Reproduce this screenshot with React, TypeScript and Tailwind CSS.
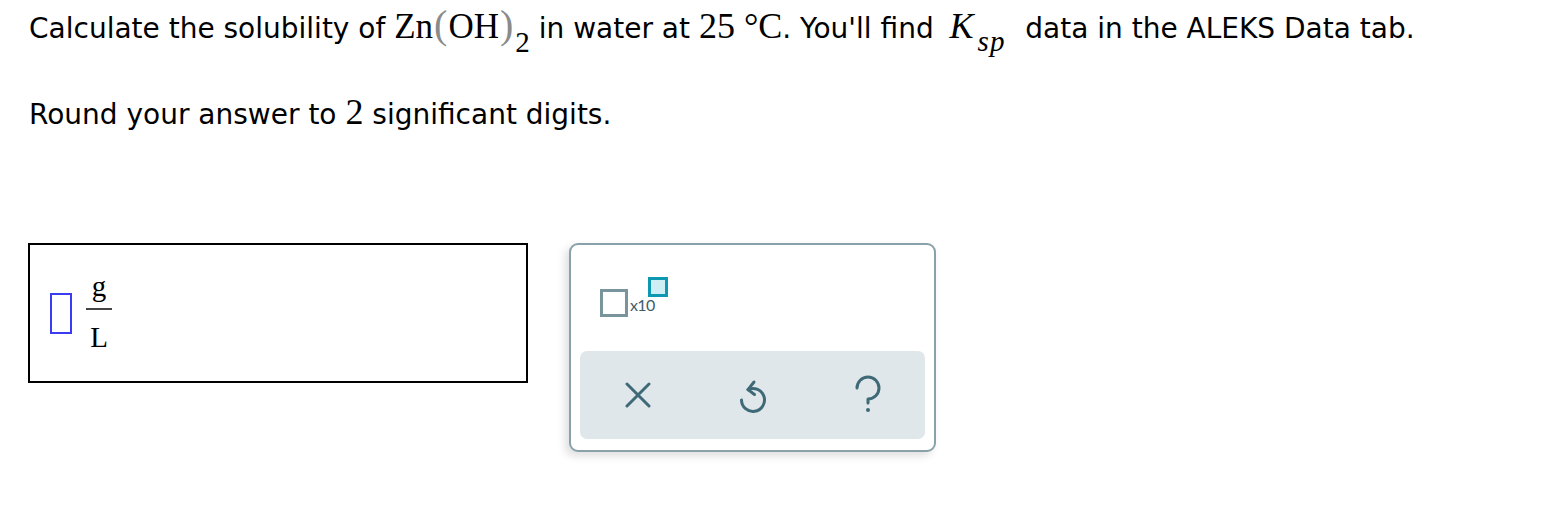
import React from "react";

const sans = { fontFamily: '"DejaVu Sans", Verdana, sans-serif' };

function UndoIcon() {
  return (
    <svg width="28" height="36" viewBox="0 0 28 36" fill="none" stroke="#3e6a77" strokeWidth="3" strokeLinecap="round" strokeLinejoin="round">
      <path d="M9 12.6 A11.5 11.5 0 1 1 2.5 23" />
      <path d="M15 5 L9 12.6 L15.5 17.5" />
    </svg>
  );
}

function QuestionIcon() {
  return (
    <svg width="28" height="40" viewBox="0 0 28 40" fill="none" stroke="#3e6a77" strokeWidth="3" strokeLinecap="round" strokeLinejoin="round">
      <path d="M3 13 A11 11 0 1 1 14 24 V28" />
      <circle cx="14" cy="35" r="2" fill="#3e6a77" stroke="none" />
    </svg>
  );
}

function XIcon() {
  return (
    <svg width="26" height="26" viewBox="0 0 26 26" fill="none" stroke="#3e6a77" strokeWidth="3" strokeLinecap="round">
      <path d="M2 2 L24 24 M24 2 L2 24" />
    </svg>
  );
}

export default function App() {
  return (
    <div className="bg-white w-[1566px] h-[531px] text-black pl-[29px] pt-[5px] overflow-hidden">
      <div className="h-[40px] whitespace-nowrap text-[28px] leading-[40px]" style={sans}>
        <span>Calculate the solubility of </span>
        <span className="font-['Liberation_Serif',serif] text-[35px]">
          Zn
          <span className="text-[40px] text-[#8a8a8a] mx-[1px]">(</span>
          OH
          <span className="text-[40px] text-[#8a8a8a] mx-[1px]">)</span>
          <span className="text-[29px] relative top-[14px] ml-[1px]">2</span>
        </span>
        <span> in water at </span>
        <span className="font-['Liberation_Serif',serif] text-[36px]">25 °C</span>
        <span>. You'll find </span>
        <span className="font-['Liberation_Serif',serif] italic text-[36px] ml-[7px]">
          K<span className="text-[29px] relative top-[13px] ml-[4px] mr-[11px] tracking-[1px]">sp</span>
        </span>
        <span> data in the ALEKS Data tab.</span>
      </div>
      <div className="h-[40px] mt-[47px] whitespace-nowrap text-[28px] leading-[40px]" style={sans}>
        <span>Round your answer to </span>
        <span className="font-['Liberation_Serif',serif] text-[36px]">2</span>
        <span> significant digits.</span>
      </div>

      <div className="mt-[111px] flex items-start gap-[41px] -ml-[1px]">
        <div className="w-[500px] h-[140px] border-2 border-black flex items-center pl-[20px]">
          <div className="w-[22px] h-[41px] border-2 border-[#3b3bf2]" />
          <div className="ml-[14px] flex flex-col items-center font-['Liberation_Serif',serif] text-[29px] leading-none">
            <span className="-mt-[3px]">g</span>
            <div className="w-[26px] h-[2px] bg-[#444] mt-[7px]" />
            <span className="mt-[13px]">L</span>
          </div>
        </div>

        <div className="w-[367px] h-[209px] border-2 border-[#89a2a9] rounded-[9px] bg-white shadow-[-4px_4px_8px_rgba(0,0,0,0.13)] flex flex-col px-[9px] pb-[9px]">
          <div className="h-[106px] relative">
            <div className="absolute left-[20px] top-[44px] w-[28px] h-[28px] border-[3px] border-[#7a949b]" />
            <span className="absolute left-[50px] top-[52px] text-[16px] leading-none text-[#3f5d67] font-['Lato',sans-serif] tracking-[-0.6px]">x10</span>
            <div className="absolute left-[68px] top-[32px] w-[20px] h-[20px] border-[3px] border-[#0e97b0] bg-[#cdeef4]" />
          </div>
          <div className="h-[88px] bg-[#e0e7ea] rounded-[7px] grid grid-cols-3 items-center">
            <div className="flex justify-center"><XIcon /></div>
            <div className="flex justify-center"><UndoIcon /></div>
            <div className="flex justify-center"><QuestionIcon /></div>
          </div>
        </div>
      </div>
    </div>
  );
}
